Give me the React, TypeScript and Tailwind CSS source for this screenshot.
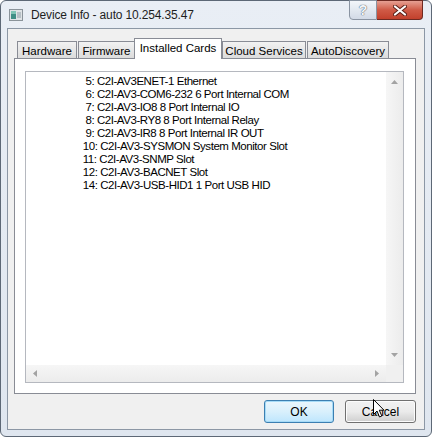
import React from "react";

const tabs = [
  { label: "Hardware", w: "w-[60px]" },
  { label: "Firmware", w: "w-[57px]" },
  { label: "Installed Cards", w: "w-[88px]", active: true },
  { label: "Cloud Services", w: "w-[84px]" },
  { label: "AutoDiscovery", w: "w-[82px]" },
];

const cards: [number, string][] = [
  [5, "C2I-AV3ENET-1 Ethernet"],
  [6, "C2I-AV3-COM6-232 6 Port Internal COM"],
  [7, "C2I-AV3-IO8 8 Port Internal IO"],
  [8, "C2I-AV3-RY8 8 Port Internal Relay"],
  [9, "C2I-AV3-IR8 8 Port Internal IR OUT"],
  [10, "C2I-AV3-SYSMON System Monitor Slot"],
  [11, "C2I-AV3-SNMP Slot"],
  [12, "C2I-AV3-BACNET Slot"],
  [14, "C2I-AV3-USB-HID1 1 Port USB HID"],
];

function Arrow({ dir }: { dir: "up" | "down" | "left" | "right" }) {
  const pts = {
    up: "0,4 3.5,0 7,4",
    down: "0,0 3.5,4 7,0",
    left: "4,0 0,3.5 4,7",
    right: "0,0 4,3.5 0,7",
  }[dir];
  const vertical = dir === "up" || dir === "down";
  return (
    <svg width={vertical ? 7 : 4} height={vertical ? 4 : 7} viewBox={vertical ? "0 0 7 4" : "0 0 4 7"}>
      <polygon points={pts} fill="#a3a3a3" />
    </svg>
  );
}

function AppIcon() {
  return (
    <svg width="14" height="12" viewBox="0 0 14 12">
      <rect x="0.5" y="0.5" width="13" height="11" fill="#dfe3e6" stroke="#8a939a" />
      <rect x="2" y="2" width="5" height="8" fill="#3f8f86" />
      <rect x="2" y="2" width="5" height="3" fill="#7fc4b5" />
      <rect x="8" y="3" width="4" height="6" fill="#b7c0c6" />
    </svg>
  );
}

function Pointer() {
  return (
    <svg width="13" height="20" viewBox="0 0 13 20" className="absolute left-[373px] top-[399px]">
      <path
        d="M0.5 0.5 L0.5 15.5 L4 12 L6.5 18 L8.8 17 L6.3 11.2 L11 11.2 Z"
        fill="#ffffff"
        stroke="#000000"
        strokeWidth="1"
        strokeLinejoin="miter"
      />
    </svg>
  );
}

export default function App() {
  return (
    <div className="relative h-[438px] w-[432px] overflow-hidden bg-white font-['Liberation_Sans',Arial,sans-serif] text-black">
      <div className="flex h-[437px] w-[432px] flex-col rounded-[6px] border border-[#5d6876] bg-gradient-to-b from-[#e9eef5] to-[#dfe6ef]">
        {/* title bar */}
        <div className="flex h-[27px] shrink-0 items-start">
          <div className="ml-[8px] mt-[8px]">
            <AppIcon />
          </div>
          <div className="ml-[8px] mt-[6px] text-[12px] leading-[16px] tracking-[-0.15px] text-[#1e1e1e]">
            Device Info - auto 10.254.35.47
          </div>
          <div className="ml-auto mr-[8px] flex -mt-px">
            <div className="flex h-[20px] w-[28px] items-center justify-center rounded-bl-[4px] border border-[#8a94a2] bg-gradient-to-b from-[#f3f6fa] via-[#e2e8f0] to-[#d2dae6] text-[14px] font-bold text-[#f4f6f9] [text-shadow:0_0_1px_#4d5866,0_0_1px_#4d5866]">
              ?
            </div>
            <div className="flex h-[20px] w-[46px] items-center justify-center rounded-br-[4px] border border-l-0 border-[#6e2a22] bg-gradient-to-b from-[#e6a093] via-[#cf5a46] to-[#c2402c]">
              <svg width="14" height="11" viewBox="0 0 14 11">
                <path d="M2 1.5 L12 9.5 M12 1.5 L2 9.5" stroke="#5a1f18" strokeWidth="4" strokeLinecap="round" />
                <path d="M2 1.5 L12 9.5 M12 1.5 L2 9.5" stroke="#ffffff" strokeWidth="2.2" strokeLinecap="round" />
              </svg>
            </div>
          </div>
        </div>

        {/* client area */}
        <div className="mx-[6px] mb-[6px] flex flex-1 flex-col border border-[#8c97a5] bg-[#f0f0f0] pl-[6px] pr-[8px] pt-[9px]">
          {/* tab strip */}
          <div className="relative z-10 -mb-px flex h-[21px] items-end pl-[2px]">
            {tabs.map((t) =>
              t.active ? (
                <div
                  key={t.label}
                  className={`${t.w} -mx-[1px] flex h-[21px] items-start justify-center border border-b-0 border-[#898c95] bg-white pt-[2px] text-[11.5px] leading-[15px]`}
                >
                  {t.label}
                </div>
              ) : (
                <div
                  key={t.label}
                  className={`${t.w} ml-[1px] flex h-[18px] items-start justify-center border border-[#898c95] bg-gradient-to-b from-[#f2f2f2] to-[#dcdcdc] pt-[2px] text-[11.5px] leading-[15px]`}
                >
                  {t.label}
                </div>
              )
            )}
          </div>

          {/* tab page */}
          <div className="flex h-[336px] flex-col border border-[#898c95] bg-white pl-[10px] pr-[11px] pt-[12px]">
            <div className="flex h-[312px] flex-col border border-[#b5b8bf] bg-white">
              <div className="flex flex-1">
                <div className="flex-1 pl-[54px] pt-[3px] text-[11.5px] leading-[13px] tracking-[-0.45px]">
                  {cards.map(([n, name]) => (
                    <div key={n} className="whitespace-pre">
                      {`${String(n).padStart(3, " ")}: ${name}`}
                    </div>
                  ))}
                </div>
                <div className="flex w-[17px] flex-col items-center justify-between bg-gradient-to-r from-[#f6f6f6] to-[#ececec] py-[8px]">
                  <Arrow dir="up" />
                  <Arrow dir="down" />
                </div>
              </div>
              <div className="flex h-[17px]">
                <div className="flex flex-1 items-center justify-between bg-gradient-to-b from-[#f6f6f6] to-[#ececec] px-[7px]">
                  <Arrow dir="left" />
                  <Arrow dir="right" />
                </div>
                <div className="w-[17px] bg-[#f0f0f0]" />
              </div>
            </div>
          </div>

          {/* dialog buttons */}
          <div className="mt-[6px] flex justify-end gap-[11px]">
            <button className="flex h-[23px] w-[70px] items-center justify-center rounded-[3px] border border-[#3c7fb1] bg-gradient-to-b from-[#eaf6fd] via-[#d9f0fc] to-[#bee6fd] text-[12px] shadow-[inset_0_0_0_1px_#a6dbf7]">
              OK
            </button>
            <button className="flex h-[23px] w-[71px] items-center justify-center rounded-[3px] border border-[#707070] bg-gradient-to-b from-[#f2f2f2] via-[#ebebeb] to-[#cfcfcf] text-[12px] shadow-[inset_0_0_0_1px_#fcfcfc]">
              Cancel
            </button>
          </div>
        </div>
      </div>
      <Pointer />
    </div>
  );
}
